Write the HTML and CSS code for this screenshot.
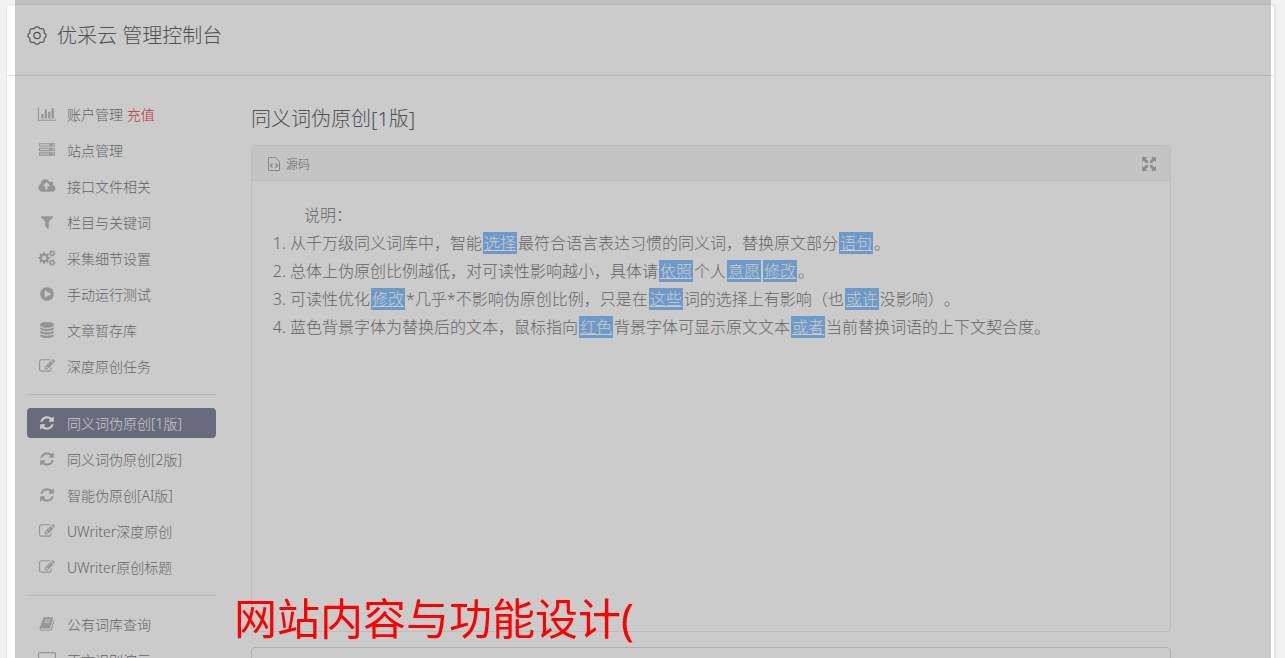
FILE: index.html
```html
<!DOCTYPE html>
<html lang="zh-CN">
<head>
    <meta charset="UTF-8">
    <meta name="viewport" content="width=device-width, initial-scale=1.0">
    <title>优采云 管理控制台</title>
    <link rel="stylesheet" href="styles.css">
</head>
<body>
    <svg class="sprite" aria-hidden="true">
        <symbol id="i-chart" viewBox="0 0 2048 1792"><path d="M640 896v512h-256v-512h256zm384-512v1024h-256v-1024h256zm1024 1152v128h-2048v-1536h128v1408h1920zm-640-896v768h-256v-768h256zm384-384v1152h-256v-1152h256z"/></symbol>
        <symbol id="i-server" viewBox="0 0 1792 1792"><path d="M128 1408h1024v-128h-1024v128zm0-512h1024v-128h-1024v128zm1568 448q0-40-28-68t-68-28-68 28-28 68 28 68 68 28 68-28 28-68zm-1568-960h1024v-128h-1024v128zm1568 448q0-40-28-68t-68-28-68 28-28 68 28 68 68 28 68-28 28-68zm0-512q0-40-28-68t-68-28-68 28-28 68 28 68 68 28 68-28 28-68zm96 832v384h-1792v-384h1792zm0-512v384h-1792v-384h1792zm0-512v384h-1792v-384h1792z"/></symbol>
        <symbol id="i-cloud" viewBox="0 0 1920 1792"><path d="M1280 864q0-14-9-23l-352-352q-9-9-23-9t-23 9l-351 351q-10 12-10 24 0 14 9 23t23 9h224v352q0 13 9.5 22.5t22.5 9.5h192q13 0 22.5-9.5t9.5-22.5v-352h224q13 0 22.5-9.5t9.5-22.5zm640 288q0 159-112.5 271.5t-271.5 112.5h-1088q-185 0-316.5-131.5t-131.5-316.5q0-130 70-240t188-165q-2-30-2-43 0-212 150-362t362-150q156 0 285.5 87t188.5 231q71-62 166-62 106 0 181 75t75 181q0 76-41 138 130 31 213.5 135.5t83.5 238.5z"/></symbol>
        <symbol id="i-filter" viewBox="0 0 1792 1792"><path d="M1595 295q17 41-14 70l-493 493v742q0 42-39 59-13 5-25 5-27 0-45-19l-256-256q-19-19-19-45v-486l-493-493q-31-29-14-70 17-39 59-39h1280q42 0 59 39z"/></symbol>
        <symbol id="i-cogs" viewBox="0 0 1920 1792"><path d="M896 896q0-106-75-181t-181-75-181 75-75 181 75 181 181 75 181-75 75-181zm768 512q0-52-38-90t-90-38-90 38-38 90q0 53 37.5 90.5t90.5 37.5 90.5-37.5 37.5-90.5zm0-1024q0-52-38-90t-90-38-90 38-38 90q0 53 37.5 90.5t90.5 37.5 90.5-37.5 37.5-90.5zm-384 421v185q0 10-7 19.5t-16 10.5l-155 24q-11 35-32 76 34 48 90 115 7 11 7 20 0 12-7 19-23 30-82.5 89.5t-78.5 59.5q-11 0-21-7l-115-90q-37 19-77 31-11 108-23 155-7 24-30 24h-186q-11 0-20-7.5t-10-17.5l-23-153q-34-10-75-31l-118 89q-7 7-20 7-11 0-21-8-144-133-144-160 0-9 7-19 10-14 41-53t47-61q-23-44-35-82l-152-24q-10-1-17-9.5t-7-19.5v-185q0-10 7-19.5t16-10.5l155-24q11-35 32-76-34-48-90-115-7-11-7-20 0-12 7-20 22-30 82-89t79-59q11 0 21 7l115 90q34-18 77-32 11-108 23-154 7-24 30-24h186q11 0 20 7.5t10 17.5l23 153q34 10 75 31l118-89q8-7 20-7 11 0 21 8 144 133 144 160 0 8-7 19-12 16-42 54t-45 60q23 48 34 82l152 23q10 2 17 10.5t7 19.5zm640 533v140q0 16-149 31-12 27-30 52 51 113 51 138 0 4-4 7-122 71-124 71-8 0-46-47t-52-68q-20 2-30 2t-30-2q-14 21-52 68t-46 47q-2 0-124-71-4-3-4-7 0-25 51-138-18-25-30-52-149-15-149-31v-140q0-16 149-31 13-29 30-52-51-113-51-138 0-4 4-7 4-2 35-20t59-34 30-16q8 0 46 46.5t52 67.5q20-2 30-2t30 2q51-71 92-112l6-2q4 0 124 70 4 3 4 7 0 25-51 138 17 23 30 52 149 15 149 31zm0-1024v140q0 16-149 31-12 27-30 52 51 113 51 138 0 4-4 7-122 71-124 71-8 0-46-47t-52-68q-20 2-30 2t-30-2q-14 21-52 68t-46 47q-2 0-124-71-4-3-4-7 0-25 51-138-18-25-30-52-149-15-149-31v-140q0-16 149-31 13-29 30-52-51-113-51-138 0-4 4-7 4-2 35-20t59-34 30-16q8 0 46 46.5t52 67.5q20-2 30-2t30 2q51-71 92-112l6-2q4 0 124 70 4 3 4 7 0 25-51 138 17 23 30 52 149 15 149 31z"/></symbol>
        <symbol id="i-play" viewBox="0 0 1792 1792"><path d="M896 128q209 0 385.5 103t279.5 279.5 103 385.5-103 385.5-279.5 279.5-385.5 103-385.5-103-279.5-279.5-103-385.5 103-385.5 279.5-279.5 385.5-103zm384 823q32-18 32-55t-32-55l-544-320q-31-19-64-1-32 19-32 56v640q0 37 32 56 16 8 32 8 17 0 32-9z"/></symbol>
        <symbol id="i-database" viewBox="0 0 1792 1792"><path d="M896 768q237 0 443-43t325-127v170q0 69-103 128t-280 93.5-385 34.5-385-34.5-280-93.5-103-128v-170q119 84 325 127t443 43zm0 768q237 0 443-43t325-127v170q0 69-103 128t-280 93.5-385 34.5-385-34.5-280-93.5-103-128v-170q119 84 325 127t443 43zm0-384q237 0 443-43t325-127v170q0 69-103 128t-280 93.5-385 34.5-385-34.5-280-93.5-103-128v-170q119 84 325 127t443 43zm0-1152q208 0 385 34.5t280 93.5 103 128v128q0 69-103 128t-280 93.5-385 34.5-385-34.5-280-93.5-103-128v-128q0-69 103-128t280-93.5 385-34.5z"/></symbol>
        <symbol id="i-edit" viewBox="0 0 1792 1792"><path d="M888 1184l116-116-152-152-116 116v56h96v96h56zm440-720q-16-16-33 1l-350 350q-17 17-1 33t33-1l350-350q17-17 1-33zm80 594v190q0 119-84.5 203.5t-203.5 84.5h-832q-119 0-203.5-84.5t-84.5-203.5v-832q0-119 84.5-203.5t203.5-84.5h832q63 0 117 25 15 7 18 23 3 17-9 29l-49 49q-14 14-32 8-23-6-45-6h-832q-66 0-113 47t-47 113v832q0 66 47 113t113 47h832q66 0 113-47t47-113v-126q0-13 9-22l64-64q15-15 35-7t20 29zm-96-738l288 288-672 672h-288v-288zm444 132l-92 92-288-288 92-92q28-28 68-28t68 28l152 152q28 28 28 68t-28 68z"/></symbol>
        <symbol id="i-refresh" viewBox="0 0 1792 1792"><path d="M1639 1056q0 5-1 7-64 268-268 434.5t-478 166.5q-146 0-282.5-55t-243.5-157l-129 129q-19 19-45 19t-45-19-19-45v-448q0-26 19-45t45-19h448q26 0 45 19t19 45-19 45l-137 137q71 66 161 102t187 36q134 0 250-65t186-179q11-17 53-117 8-23 30-23h192q13 0 22.5 9.5t9.5 22.5zm25-800v448q0 26-19 45t-45 19h-448q-26 0-45-19t-19-45 19-45l138-138q-148-137-349-137-134 0-250 65t-186 179q-11 17-53 117-8 23-30 23h-199q-13 0-22.5-9.5t-9.5-22.5v-7q65-268 270-434.5t480-166.5q146 0 284 55.5t245 156.5l130-129q19-19 45-19t45 19 19 45z"/></symbol>
        <symbol id="i-book" viewBox="0 0 1792 1792"><path d="M1703 478q40 57 18 129l-275 906q-19 64-76.5 107.5t-122.5 43.5h-923q-77 0-148.5-53.5t-99.5-131.5q-24-67-2-127 0-4 3-27t4-37q1-8-3-21.5t-3-19.5q2-11 8-21t16.5-23.5 16.5-23.5q23-38 45-91.5t30-91.5q3-10 .5-30t-.5-28q3-11 17-28t17-23q21-36 42-92t25-90q1-9-2.5-32t.5-28q4-13 22-30.5t22-22.5q19-26 42.5-84.5t27.5-96.5q1-8-3-25.5t-2-26.5q2-8 9-18t18-23 17-21q8-12 16.5-30.5t15-35 16-36 19.5-32 26.5-23.5 36-11.5 47.5 5.5l-1 3q38-9 51-9h761q74 0 114 56t18 130l-274 906q-36 119-71.5 153.5t-128.5 34.5h-869q-27 0-38 15-11 16-1 43 24 70 144 70h923q29 0 56-15.5t35-41.5l300-987q7-22 5-57 38 15 59 43zm-1064 2q-4 13 2 22.5t20 9.5h608q13 0 25.5-9.5t16.5-22.5l21-64q4-13-2-22.5t-20-9.5h-608q-13 0-25.5 9.5t-16.5 22.5zm-83 256q-4 13 2 22.5t20 9.5h608q13 0 25.5-9.5t16.5-22.5l21-64q4-13-2-22.5t-20-9.5h-608q-13 0-25.5 9.5t-16.5 22.5z"/></symbol>
        <symbol id="i-desktop" viewBox="0 0 18 16"><path fill-rule="evenodd" d="M1.500 0h15A1.500 1.500 0 0 1 18 1.500v10a1.500 1.500 0 0 1-1.500 1.500H11v1.500h2V16H5v-1.500h2V13H1.500A1.500 1.500 0 0 1 0 11.500v-10A1.500 1.500 0 0 1 1.500 0zM1.200 1.200v9h15.600v-9z"/></symbol>
        <symbol id="i-gear" viewBox="0 0 20 20"><g fill="none" stroke="currentColor" stroke-width="1.200" stroke-linejoin="round"><path d="M7.500 2.200Q8 .9 9.300.9h1.400q1.300 0 1.800 1.300.3.900 1.200.6 1.500-.6 2.400.2l.7.800q.9.900.3 2.300-.3.900.6 1.200 1.300.5 1.300 1.700v.9q0 1.300-1.300 1.800-.9.300-.6 1.200.6 1.400-.3 2.300l-.7.800q-.9.900-2.400.2-.9-.3-1.200.6-.5 1.300-1.800 1.300H9.300q-1.300 0-1.800-1.300-.3-.9-1.200-.6-1.500.7-2.400-.2l-.7-.8q-.9-.9-.3-2.300.3-.9-.6-1.200Q1 11.200 1 9.900V9q0-1.200 1.300-1.700.9-.3.600-1.200-.6-1.400.3-2.300l.7-.8q.9-.8 2.400-.2.900.3 1.200-.6z"/><circle cx="10" cy="9.500" r="3.200"/></g></symbol>
        <symbol id="i-code" viewBox="0 0 12 14"><g fill="none" stroke="currentColor"><path d="M.5.5h7l4 4v9H.5z"/><path d="M4.500 6.500L2.500 8.500l2 2M7.500 6.500l2 2-2 2" stroke-width="1.400"/></g></symbol>
        <symbol id="i-expand" viewBox="0 0 14 14"><path d="M0 0h5L3.500 1.500 6 4v2H4L1.500 3.500 0 5zM14 0v5l-1.500-1.500L10 6H8V4l2.500-2.500L9 0zM0 14V9l1.500 1.500L4 8h2v2l-2.500 2.500L5 14zM14 14H9l1.500-1.500L8 10V8h2l2.500 2.500L14 9z"/></symbol>
    </svg>

    <div class="card">
        <header class="card-header">
            <svg class="gear"><use href="#i-gear"/></svg>
            <h1>优采云 管理控制台</h1>
        </header>

        <div class="card-body">
            <nav class="sidebar">
                <ul>
                    <li><a href="#"><svg><use href="#i-chart"/></svg><span>账户管理 <em>充值</em></span></a></li>
                    <li><a href="#"><svg><use href="#i-server"/></svg>站点管理</a></li>
                    <li><a href="#"><svg><use href="#i-cloud"/></svg>接口文件相关</a></li>
                    <li><a href="#"><svg><use href="#i-filter"/></svg>栏目与关键词</a></li>
                    <li><a href="#"><svg><use href="#i-cogs"/></svg>采集细节设置</a></li>
                    <li><a href="#"><svg><use href="#i-play"/></svg>手动运行测试</a></li>
                    <li><a href="#"><svg><use href="#i-database"/></svg>文章暂存库</a></li>
                    <li><a href="#"><svg><use href="#i-edit"/></svg>深度原创任务</a></li>
                </ul>
                <hr>
                <ul>
                    <li><a class="active" href="#"><svg><use href="#i-refresh"/></svg>同义词伪原创[1版]</a></li>
                    <li><a href="#"><svg><use href="#i-refresh"/></svg>同义词伪原创[2版]</a></li>
                    <li><a href="#"><svg><use href="#i-refresh"/></svg>智能伪原创[AI版]</a></li>
                    <li><a href="#"><svg><use href="#i-edit"/></svg>UWriter深度原创</a></li>
                    <li><a href="#"><svg><use href="#i-edit"/></svg>UWriter原创标题</a></li>
                </ul>
                <hr>
                <ul>
                    <li><a href="#"><svg><use href="#i-book"/></svg>公有词库查询</a></li>
                    <li><a href="#"><svg><use href="#i-desktop"/></svg>正文识别演示</a></li>
                </ul>
            </nav>

            <main class="content">
                <h2>同义词伪原创[1版]</h2>
                <section class="editor">
                    <div class="toolbar">
                        <button type="button" class="tool"><svg class="code"><use href="#i-code"/></svg>源码</button>
                        <button type="button" class="tool" aria-label="全屏"><svg class="expand"><use href="#i-expand"/></svg></button>
                    </div>
                    <div class="editor-text">
                        <p>说明：</p>
                        <ol>
                            <li>从千万级同义词库中，智能<u>选择</u>最符合语言表达习惯的同义词，替换原文部分<u>语句</u>。</li>
                            <li>总体上伪原创比例越低，对可读性影响越小，具体请<u>依照</u>个人<u>意愿</u><u>修改</u>。</li>
                            <li>可读性优化<u>修改</u>*几乎*不影响伪原创比例，只是在<u>这些</u>词的选择上有影响（也<u>或许</u>没影响）。</li>
                            <li>蓝色背景字体为替换后的文本，鼠标指向<u>红色</u>背景字体可显示原文文本<u>或者</u>当前替换词语的上下文契合度。</li>
                        </ol>
                    </div>
                </section>
                <textarea class="source" rows="4" aria-label="原文"></textarea>
            </main>
        </div>
    </div>

    <div class="shade"></div>
    <div class="caption">网站内容与功能设计(</div>
</body>
</html>
```

FILE: styles.css
```css
* {
    box-sizing: border-box;
}

html {
    scrollbar-width: none;
}

body {
    margin: 0;
    padding: 4px 10px 0 6px;
    background-color: #f2f2f2;
    color: #808080;
    font-family: "Noto Sans", "Noto Sans CJK SC", sans-serif;
    font-size: 14px;
    font-weight: 300;
    text-spacing-trim: space-all;
}

h1,
h2,
p,
ul,
ol {
    margin: 0;
    padding: 0;
    font-weight: 300;
}

.sprite {
    position: absolute;
    width: 0;
    height: 0;
}

.card {
    background-color: #fff;
    border: 1px solid #e5e5e5;
    border-radius: 4px;
    box-shadow: 1px 0 0 #e5e5e5;
}

.card-header {
    display: flex;
    align-items: center;
    gap: 10px;
    padding: 16px 20px 24px;
    border-bottom: 1px solid #e7e7e7;
    color: #666;
}

.card-header h1 {
    font-size: 20px;
    line-height: 30px;
}

.gear {
    width: 20px;
    height: 20px;
}

.card-body {
    display: flex;
    gap: 35px;
    padding: 23px 20px;
}

/* menu */
.sidebar {
    flex: 0 0 189px;
}

.sidebar ul {
    list-style: none;
}

.sidebar li {
    margin-bottom: 6px;
}

.sidebar a {
    display: flex;
    align-items: center;
    gap: 10px;
    height: 30px;
    padding: 0 10px 1px;
    border-radius: 4px;
    color: #808080;
    text-decoration: none;
}

.sidebar svg {
    width: 20px;
    height: 16px;
    fill: #bcbcbc;
}

.sidebar em {
    color: #f0404c;
    font-style: normal;
}

.sidebar a.active {
    background-color: #80889c;
    color: #fff;
}

.sidebar a.active svg {
    fill: #fff;
}

.sidebar hr {
    height: 1px;
    margin: 13px 0;
    border: 0;
    background-color: #e9e9e9;
}

/* editor */
.content {
    flex: 1;
    max-width: 920px;
    padding-top: 6px;
}

.content h2 {
    margin-bottom: 12px;
    color: #666;
    font-size: 20px;
    line-height: 28px;
}

.editor {
    min-height: 487px;
    border: 1px solid #ededed;
    border-radius: 4px;
}

.toolbar {
    display: flex;
    align-items: center;
    justify-content: space-between;
    height: 35px;
    padding: 2px 14px 0 16px;
    border-bottom: 1px solid #ededed;
    background-color: #f7f7f7;
}

.tool {
    display: flex;
    align-items: center;
    gap: 6px;
    padding: 0;
    border: 0;
    background: none;
    color: #808080;
    font: inherit;
    font-size: 12px;
}

.code {
    width: 12px;
    height: 14px;
    color: #aaa;
}

.expand {
    width: 14px;
    height: 14px;
    fill: #b0b0b0;
}

.editor-text {
    padding: 20px;
    font-size: 16px;
    line-height: 28px;
}

.editor-text p {
    text-indent: 2em;
}

.editor-text ol {
    padding-left: 18px;
}

.editor-text u {
    margin: 0 1px;
    padding: 0 1px;
    background-color: #8ac2fd;
    color: #fff;
}

.source {
    display: block;
    width: 100%;
    margin-top: 15px;
    border: 1px solid #dcdcdc;
    border-radius: 4px;
    background-color: #fff;
    font: inherit;
}

/* grey layer and caption over the page */
.shade {
    position: fixed;
    top: 0;
    right: 14px;
    bottom: 0;
    left: 15px;
    background-color: rgba(0, 0, 0, 0.205);
    pointer-events: none;
}

.caption {
    position: fixed;
    bottom: 7px;
    left: 234px;
    color: #f00;
    font-size: 43px;
    font-weight: 400;
    line-height: 64px;
}
```
